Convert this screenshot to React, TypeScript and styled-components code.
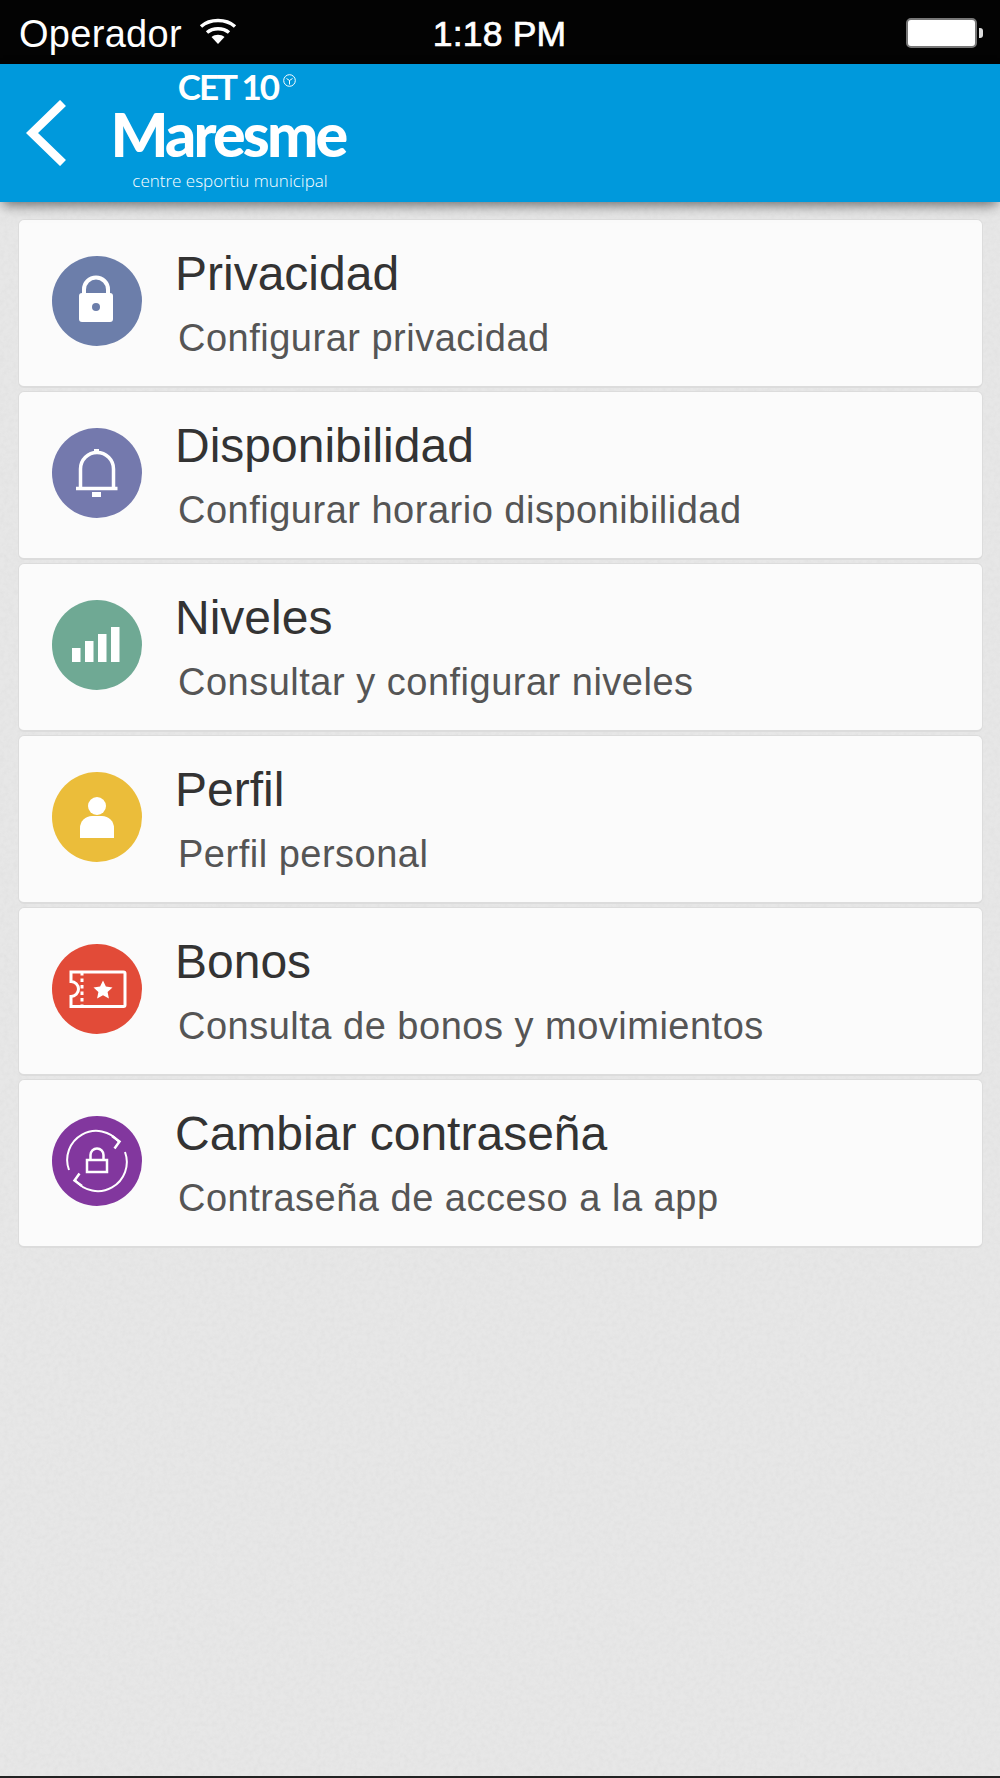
import styled, { createGlobalStyle } from "styled-components";
import type { ReactNode } from "react";

const noise = `url("data:image/svg+xml,%3Csvg xmlns='http://www.w3.org/2000/svg' width='400' height='400'%3E%3Cfilter id='n'%3E%3CfeTurbulence type='fractalNoise' baseFrequency='0.22' numOctaves='2' stitchTiles='stitch'/%3E%3CfeColorMatrix values='0 0 0 0 0.5 0 0 0 0 0.5 0 0 0 0 0.5 0.6 0 0 0 -0.2'/%3E%3C/filter%3E%3Crect width='400' height='400' filter='url(%23n)' opacity='0.35'/%3E%3C/svg%3E")`;

const GlobalStyle = createGlobalStyle`
    html, body {
        margin: 0;
        padding: 0;
    }
    body {
        background: #e5e5e5;
        font-family: "Liberation Sans", Arial, sans-serif;
    }
`;

const Screen = styled.div`
    width: 1000px;
    height: 1778px;
    display: flex;
    flex-direction: column;
    overflow: hidden;
    background: #e7e7e7 ${noise};
    border-bottom: 2px solid #222;
    box-sizing: border-box;
`;

const StatusBar = styled.div`
    height: 64px;
    flex: none;
    background: #030303;
    color: #fff;
    display: grid;
    grid-template-columns: 1fr auto 1fr;
    align-items: center;
    padding: 0 17px 0 19px;
    font-size: 38px;
`;
const Carrier = styled.div`
    display: flex;
    align-items: center;
    gap: 17px;
    letter-spacing: 0.3px;
    padding-top: 4px;
    svg {
        margin-top: -7px;
    }
`;
const Clock = styled.div`
    font-size: 35.5px;
    -webkit-text-stroke: 0.7px #fff;
    letter-spacing: 0.2px;
    padding-top: 4px;
    margin-left: -3px;
`;
const Battery = styled.div`
    justify-self: end;
    display: flex;
    align-items: center;
    gap: 2px;
    padding-top: 2px;
`;
const BatteryBody = styled.div`
    width: 67px;
    height: 26px;
    background: #fff;
    border: 2px solid #777;
    border-radius: 5px;
`;
const BatteryTip = styled.div`
    width: 4px;
    height: 10px;
    background: #ddd;
    border-radius: 0 3px 3px 0;
`;

const Header = styled.header`
    height: 138px;
    flex: none;
    background: #0099dc;
    display: flex;
    align-items: center;
    padding-left: 26px;
    box-shadow: 0 6px 12px -3px rgba(0, 0, 0, 0.55);
    position: relative;
    z-index: 1;
`;
const BackIcon = styled.svg`
    width: 40px;
    height: 66px;
`;
const Logo = styled.div`
    margin-left: 44px;
    width: 236px;
    height: 138px;
    color: #fff;
    display: flex;
    flex-direction: column;
    align-items: center;
    font-family: Lato, sans-serif;
`;
const LogoTop = styled.div`
    display: flex;
    align-items: flex-start;
    gap: 5px;
    font-size: 35px;
    line-height: 30px;
    font-weight: 700;
    letter-spacing: -2px;
    margin: 7px 0 0 18px;
`;
const LogoMark = styled.svg`
    width: 13px;
    height: 13px;
    margin-top: 3px;
`;
const LogoName = styled.div`
    font-size: 61px;
    line-height: 60px;
    font-weight: 900;
    letter-spacing: -2.8px;
    margin-top: 3px;
`;
const LogoTag = styled.div`
    font-family: "Open Sans", sans-serif;
    font-size: 17px;
    line-height: 20px;
    font-weight: 300;
    margin: 7px 0 0 4px;
    white-space: nowrap;
`;

const List = styled.main`
    display: flex;
    flex-direction: column;
    gap: 3px;
    padding: 17px 17px 0 18px;
`;
const Card = styled.div`
    height: 166px;
    display: flex;
    align-items: center;
    background: #fbfbfb;
    border: 1px solid #dcdcdc;
    border-bottom-width: 2px;
    border-radius: 6px;
`;
const Circle = styled.div<{ $color: string }>`
    width: 90px;
    height: 90px;
    flex: none;
    margin: -5px 0 0 33px;
    border-radius: 50%;
    background: ${(props) => props.$color};
    svg {
        display: block;
        width: 90px;
        height: 90px;
    }
`;
const CardText = styled.div`
    margin-left: 33px;
    display: flex;
    flex-direction: column;
`;
const Title = styled.div`
    color: #333;
    font-size: 48px;
    line-height: 54px;
`;
const Subtitle = styled.div`
    color: #555;
    font-size: 38px;
    line-height: 42px;
    margin-top: 16px;
    margin-left: 3px;
    letter-spacing: 0.5px;
`;

const LockIcon = () => (
    <svg viewBox="0 0 90 90">
        <path d="M32 42V33.500a12 12 0 0 1 24 0V42" fill="none" stroke="#fff" strokeWidth="4" />
        <rect x="27" y="37" width="34" height="29" rx="3" fill="#fff" />
        <circle cx="44" cy="51" r="4" fill="#6c7eaa" />
    </svg>
);
const BellIcon = () => (
    <svg viewBox="0 0 90 90" fill="none" stroke="#fff" strokeWidth="3.500">
        <path d="M28.500 60V41a16.500 16.500 0 0 1 33 0V60" />
        <path d="M24 60.500h41.500" />
        <rect x="42" y="21" width="5" height="4" fill="#fff" stroke="none" />
        <rect x="40" y="64" width="9" height="5" fill="#fff" stroke="none" />
    </svg>
);
const BarsIcon = () => (
    <svg viewBox="0 0 90 90" fill="#fff">
        <rect x="20" y="48" width="8.500" height="14" />
        <rect x="33" y="41" width="8.500" height="21" />
        <rect x="46" y="34" width="8.500" height="28" />
        <rect x="59" y="27" width="8.500" height="35" />
    </svg>
);
const PersonIcon = () => (
    <svg viewBox="0 0 90 90" fill="#fff">
        <circle cx="45" cy="34" r="9" />
        <path d="M28 66V56a12 12 0 0 1 12-12h10a12 12 0 0 1 12 12v10z" />
    </svg>
);
const TicketIcon = () => (
    <svg viewBox="0 0 90 90" fill="none" stroke="#fff" strokeWidth="3">
        <path d="M19 28H71.500a1.500 1.500 0 0 1 1.500 1.500V61a1.500 1.500 0 0 1-1.500 1.500H19V52.500a7.500 7.500 0 0 0 0-15z" />
        <path d="M30 28V63" strokeDasharray="3.500 3" />
        <path d="M51 36.500l2.900 6.100 6.600.8-4.900 4.500 1.300 6.600-5.900-3.300-5.900 3.300 1.300-6.600-4.900-4.500 6.600-.8z" fill="#fff" stroke="none" />
    </svg>
);
const SyncLockIcon = () => (
    <svg viewBox="0 0 90 90" fill="none" stroke="#fff" strokeWidth="2">
        <path d="M17 54A29 29 0 0 1 67 26" />
        <path d="M60 20l7.500 5.500-5 7" strokeWidth="2.500" />
        <path d="M73 36A29 29 0 0 1 23 64" />
        <path d="M30 70l-7.500-5.500 5-7" strokeWidth="2.500" />
        <rect x="35" y="44" width="20" height="12" strokeWidth="2.500" />
        <path d="M38.500 44v-5a6.500 6.500 0 0 1 13 0v5" strokeWidth="2.500" />
    </svg>
);

interface IItem {
    title: string;
    subtitle: string;
    color: string;
    icon: ReactNode;
}

const items: IItem[] = [
    { title: "Privacidad", subtitle: "Configurar privacidad", color: "#6c7eaa", icon: <LockIcon /> },
    { title: "Disponibilidad", subtitle: "Configurar horario disponibilidad", color: "#7479ad", icon: <BellIcon /> },
    { title: "Niveles", subtitle: "Consultar y configurar niveles", color: "#6fa994", icon: <BarsIcon /> },
    { title: "Perfil", subtitle: "Perfil personal", color: "#ebbd3a", icon: <PersonIcon /> },
    { title: "Bonos", subtitle: "Consulta de bonos y movimientos", color: "#e24b38", icon: <TicketIcon /> },
    { title: "Cambiar contraseña", subtitle: "Contraseña de acceso a la app", color: "#82379e", icon: <SyncLockIcon /> },
];

function App() {
    return (
        <Screen>
            <GlobalStyle />
            <StatusBar>
                <Carrier>
                    Operador
                    <svg width="38" height="28" viewBox="0 0 38 28" fill="none" stroke="#fff" strokeWidth="3.500">
                        <path d="M2 9.500C11 1.500 27 1.500 36 9.500" />
                        <path d="M8 15.500C14 10.500 24 10.500 30 15.500" />
                        <path d="M19 27l-6.500-7c3.500-3 9.500-3 13 0z" fill="#fff" stroke="none" />
                    </svg>
                </Carrier>
                <Clock>1:18 PM</Clock>
                <Battery>
                    <BatteryBody />
                    <BatteryTip />
                </Battery>
            </StatusBar>
            <Header>
                <BackIcon viewBox="0 0 40 66" fill="none" stroke="#fff" strokeWidth="8.500">
                    <path d="M37 3L6 33l31 30" />
                </BackIcon>
                <Logo>
                    <LogoTop>
                        CET 10
                        <LogoMark viewBox="0 0 13 13" fill="none" stroke="#fff" strokeWidth="1">
                            <circle cx="6.500" cy="6.500" r="5.800" />
                            <path d="M3.500 4.500l3 2 3-2M6.500 6.500v4" />
                        </LogoMark>
                    </LogoTop>
                    <LogoName>Maresme</LogoName>
                    <LogoTag>centre esportiu municipal</LogoTag>
                </Logo>
            </Header>
            <List>
                {items.map((item) => (
                    <Card key={item.title}>
                        <Circle $color={item.color}>{item.icon}</Circle>
                        <CardText>
                            <Title>{item.title}</Title>
                            <Subtitle>{item.subtitle}</Subtitle>
                        </CardText>
                    </Card>
                ))}
            </List>
        </Screen>
    );
}

export default App;
